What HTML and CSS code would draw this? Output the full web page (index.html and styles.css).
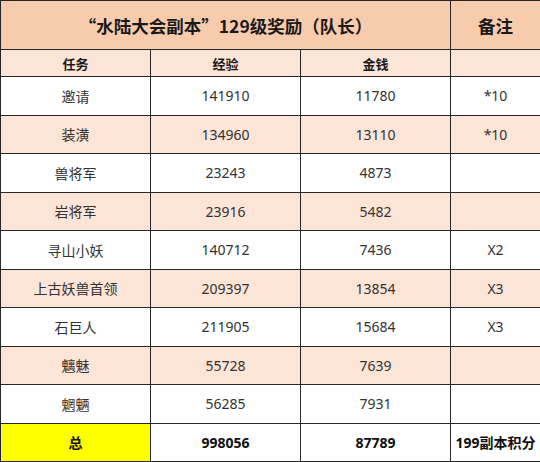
FILE: index.html
```html
<!DOCTYPE html>
<html lang="zh">
<head>
<meta charset="utf-8">
<link rel="stylesheet" href="styles.css">
</head>
<body>
<table class="sheet">
  <colgroup>
    <col class="c1"><col class="c2"><col class="c3"><col class="c4">
  </colgroup>
  <tr class="title-row">
    <td colspan="3" class="title">“水陆大会副本”129级奖励（队长）</td>
    <td class="title note">备注</td>
  </tr>
  <tr class="head-row">
    <td>任务</td><td>经验</td><td>金钱</td><td></td>
  </tr>
  <tr class="row"><td>邀请</td><td>141910</td><td>11780</td><td>*10</td></tr>
  <tr class="row alt"><td>装潢</td><td>134960</td><td>13110</td><td>*10</td></tr>
  <tr class="row"><td>兽将军</td><td>23243</td><td>4873</td><td></td></tr>
  <tr class="row alt"><td>岩将军</td><td>23916</td><td>5482</td><td></td></tr>
  <tr class="row"><td>寻山小妖</td><td>140712</td><td>7436</td><td>X2</td></tr>
  <tr class="row alt"><td>上古妖兽首领</td><td>209397</td><td>13854</td><td>X3</td></tr>
  <tr class="row"><td>石巨人</td><td>211905</td><td>15684</td><td>X3</td></tr>
  <tr class="row alt"><td>魑魅</td><td>55728</td><td>7639</td><td></td></tr>
  <tr class="row"><td>魍魉</td><td>56285</td><td>7931</td><td></td></tr>
  <tr class="row total"><td class="yellow">总</td><td>998056</td><td>87789</td><td>199副本积分</td></tr>
</table>
</body>
</html>
```
FILE: styles.css
```css
html, body {
  margin: 0;
  padding: 0;
  background: #ffffff;
}
.sheet {
  border-collapse: collapse;
  table-layout: fixed;
  width: 540px;
  font-family: "Noto Sans", "Noto Sans CJK SC", sans-serif;
  color: #333333;
}
.c1, .c2, .c3 { width: 150px; }
.c4 { width: 90px; }
.sheet td {
  border: 1.5px solid #262626;
  text-align: center;
  vertical-align: middle;
  padding: 0;
  font-size: 14px;
  white-space: nowrap;
}
.title-row { height: 49px; background: #f8cbad; }
.title-row td {
  font-family: "Noto Sans CJK SC", sans-serif;
  font-size: 17.5px;
  font-weight: 700;
  color: #1a1a1a;
}
.head-row { height: 27px; background: #fce4d6; }
.head-row td {
  font-size: 13px;
  font-weight: 700;
  color: #1a1a1a;
}
.row { height: 38.5px; background: #ffffff; }
.row.alt { background: #fce4d6; }
.total td {
  font-weight: 700;
  color: #111111;
}
.total td.yellow { background: #ffff00; }
```
